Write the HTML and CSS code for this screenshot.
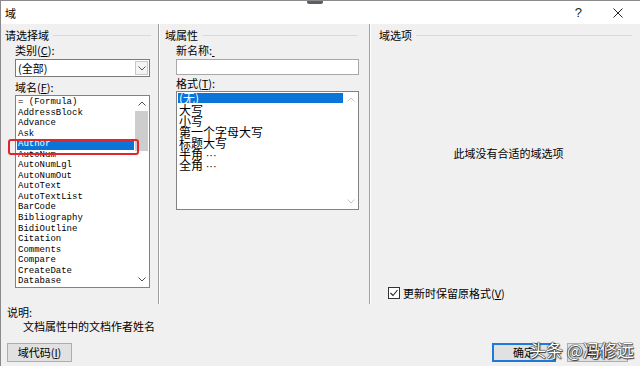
FILE: index.html
```html
<!DOCTYPE html>
<html lang="zh-CN">
<head>
<meta charset="utf-8">
<title>域</title>
<link rel="stylesheet" href="styles.css">
</head>
<body>
<div class="window">
  <div class="cursor-mark"></div>
  <div class="titlebar">
    <span class="title">域</span>
    <div class="title-btns">
      <span class="help">?</span>
      <svg class="close" width="10" height="10" viewBox="0 0 10 10"><path d="M0.5 0.5L9.5 9.5M9.5 0.5L0.5 9.5" stroke="#222" stroke-width="1" fill="none"/></svg>
    </div>
  </div>

  <div class="panes">
    <section class="pane pane-left">
      <div class="group-head"><span>请选择域</span><i class="rule"></i></div>
      <div class="indent">
        <div class="field-label first">类别(<u>C</u>):</div>
        <div class="combo">
          <span class="combo-text">(全部)</span>
          <span class="combo-btn"><svg width="8" height="5" viewBox="0 0 8 5"><path d="M0.5 0.5L4 4L7.5 0.5" stroke="#555" fill="none"/></svg></span>
        </div>
        <div class="field-label gap3">域名(<u>F</u>):</div>
        <div class="listbox names">
          <ul class="items mono">
            <li>= (Formula)</li>
            <li>AddressBlock</li>
            <li>Advance</li>
            <li>Ask</li>
            <li class="sel">Author</li>
            <li>AutoNum</li>
            <li>AutoNumLgl</li>
            <li>AutoNumOut</li>
            <li>AutoText</li>
            <li>AutoTextList</li>
            <li>BarCode</li>
            <li>Bibliography</li>
            <li>BidiOutline</li>
            <li>Citation</li>
            <li>Comments</li>
            <li>Compare</li>
            <li>CreateDate</li>
            <li>Database</li>
          </ul>
          <div class="vscroll">
            <span class="arrow"><svg width="8" height="5" viewBox="0 0 8 5"><path d="M0.5 4.5L4 1L7.5 4.5" stroke="#505050" fill="none"/></svg></span>
            <span class="thumb"></span>
            <span class="track"></span>
            <span class="arrow"><svg width="8" height="5" viewBox="0 0 8 5"><path d="M0.5 0.5L4 4L7.5 0.5" stroke="#505050" fill="none"/></svg></span>
          </div>
        </div>
      </div>
      <div class="ring"></div>
    </section>

    <section class="pane pane-mid">
      <div class="group-head"><span>域属性</span><i class="rule"></i></div>
      <div class="indent">
        <div class="field-label first">新名称:<u class="blank">&nbsp;</u></div>
        <div class="textbox"></div>
        <div class="field-label gap1">格式(<u>T</u>):</div>
        <div class="listbox formats">
          <ul class="items cjk">
            <li class="sel">(无)</li>
            <li>大写</li>
            <li>小写</li>
            <li>第一个字母大写</li>
            <li>标题大写</li>
            <li>半角 <span class="dots">···</span></li>
            <li>全角 <span class="dots">···</span></li>
          </ul>
          <div class="vscroll disabled">
            <span class="arrow"><svg width="8" height="5" viewBox="0 0 8 5"><path d="M0.5 4.5L4 1L7.5 4.5" stroke="#c4c4c4" fill="none"/></svg></span>
            <span class="track"></span>
            <span class="arrow"><svg width="8" height="5" viewBox="0 0 8 5"><path d="M0.5 0.5L4 4L7.5 0.5" stroke="#c4c4c4" fill="none"/></svg></span>
          </div>
        </div>
      </div>
    </section>

    <section class="pane pane-right">
      <div class="group-head"><span>域选项</span><i class="rule"></i></div>
      <div class="empty-msg">此域没有合适的域选项</div>
      <label class="check-row">
        <svg class="checkbox" width="12" height="12" viewBox="0 0 12 12"><rect x="0.5" y="0.5" width="11" height="11" fill="#fff" stroke="#333"/><path d="M2.5 6L5 8.5L9.5 3" stroke="#222" stroke-width="1.1" fill="none"/></svg>
        <span>更新时保留原格式(<u>V</u>)</span>
      </label>
    </section>
  </div>

  <div class="footer">
    <div class="desc-label">说明:</div>
    <div class="desc-text">文档属性中的文档作者姓名</div>
    <div class="btn-row">
      <button class="btn codes">域代码(<u>I</u>)</button>
      <span class="spacer"></span>
      <button class="btn ok">确定</button>
      <button class="btn cancel">取消</button>
    </div>
  </div>

  <div class="watermark">头条 @冯修远</div>
</div>
</body>
</html>
```

FILE: styles.css
```css
* { box-sizing: border-box; }

body {
  margin: 0;
  background: #f0f0f0;
  font-family: "Noto Sans CJK SC", "Noto Sans", sans-serif;
  font-size: 11px;
  color: #000;
}

u { text-decoration: underline; text-underline-offset: 1px; }

.window {
  width: 640px;
  height: 366px;
  position: relative;
  overflow: hidden;
  background: #f0f0f0;
  border-top: 1px solid #8a8a8a;
  border-left: 1px solid #8a8a8a;
  display: flex;
  flex-direction: column;
}

.cursor-mark {
  position: absolute;
  left: 306px;
  top: -1px;
  width: 16px;
  height: 4px;
  background: #5a5f66;
  border-radius: 0 0 2px 2px;
}

.titlebar {
  height: 23px;
  background: #fff;
  display: flex;
  align-items: center;
  justify-content: space-between;
  padding: 0 17px 0 4px;
}

.title { font-size: 11px; line-height: 14px; }

.title-btns { display: flex; align-items: center; }

.help {
  font-family: "Liberation Sans", sans-serif;
  font-size: 13px;
  line-height: 14px;
  color: #222;
  margin-right: 31px;
}

.close { display: block; }

.panes {
  display: flex;
  height: 280px;
}

.pane {
  display: flex;
  flex-direction: column;
  padding-top: 4px;
}

.pane-left {
  position: relative;
  width: 158px;
  padding-left: 4px;
  border-right: 1px solid #a0a0a0;
}

.pane-mid {
  width: 211px;
  padding-left: 5px;
  border-left: 1px solid #fff;
  border-right: 1px solid #a0a0a0;
}

.pane-right {
  flex: 1;
  padding-left: 8px;
  padding-bottom: 4px;
  border-left: 1px solid #fff;
}

.group-head {
  display: flex;
  align-items: center;
  height: 14px;
  line-height: 14px;
}

.group-head .rule {
  flex: 1;
  height: 1px;
  background: #d9d9d9;
  margin-left: 4px;
}

.pane-left .group-head .rule { margin-right: 7px; }
.pane-mid .group-head .rule { margin-right: 11px; }
.pane-right .group-head .rule { margin-right: 8px; }

.indent {
  margin-left: 10px;
  display: flex;
  flex-direction: column;
}

.pane-mid .indent { margin-left: 11px; }

.field-label {
  line-height: 14px;
  height: 14px;
}
.field-label.first { margin-top: 1px; }
.field-label.gap3 { margin-top: 3px; }
.field-label.gap1 { margin-top: 1px; }

.blank { display: inline-block; width: 4px; }

.combo {
  margin-top: 2px;
  width: 135px;
  height: 18px;
  background: #fff;
  border: 1px solid #7a7a7a;
  display: flex;
  align-items: center;
  justify-content: space-between;
  padding-left: 2px;
}

.combo-text { line-height: 14px; }

.combo-btn {
  width: 13px;
  height: 14px;
  margin-right: 1px;
  border: 1px solid #c8c8c8;
  background: #f4f4f4;
  display: flex;
  align-items: center;
  justify-content: center;
}

.combo-btn svg, .arrow svg { display: block; }

.textbox {
  margin-top: 2px;
  width: 183px;
  height: 16px;
  background: #fff;
  border: 1px solid #a8a8a8;
}

.listbox {
  margin-top: 1px;
  background: #fff;
  border: 1px solid #828282;
  display: flex;
}

.listbox.names { width: 135px; height: 193px; }
.listbox.formats { width: 183px; height: 119px; }

.items {
  list-style: none;
  margin: 0;
  padding: 0 0 0 1px;
  flex: 1;
  min-width: 0;
}

.items li { white-space: nowrap; padding-left: 1px; }

.names .items { padding-top: 1px; }

.items.mono li {
  font-family: "Liberation Mono", monospace;
  font-size: 9px;
  height: 10.55px;
  line-height: 10.55px;
}

.items.cjk li {
  font-size: 12px;
  height: 11px;
  line-height: 11px;
}

.dots {
  font-family: "Liberation Sans", sans-serif;
  font-size: 11px;
  letter-spacing: 0;
}

.items li.sel {
  background: #0a74d8;
  color: #fff;
}

.formats .items { padding-top: 1px; }
.formats .items li.sel { height: 10px; line-height: 10px; margin-bottom: 1px; }

.vscroll {
  width: 15px;
  display: flex;
  flex-direction: column;
  align-items: center;
  padding: 0 1px;
}

.vscroll .arrow {
  height: 15px;
  width: 100%;
  display: flex;
  align-items: center;
  justify-content: center;
}

.vscroll .thumb {
  width: 100%;
  height: 40px;
  background: #cdcdcd;
}

.vscroll .track { flex: 1; }

.ring {
  position: absolute;
  left: 7px;
  top: 115px;
  width: 131px;
  height: 16px;
  border: 2px solid #e0262a;
  border-radius: 3px;
}

.empty-msg {
  margin-top: 104px;
  text-align: center;
  line-height: 14px;
  padding-right: 2px;
}

.check-row {
  margin-top: auto;
  margin-left: 9px;
  display: flex;
  align-items: center;
  gap: 3px;
  line-height: 14px;
  height: 14px;
}

.checkbox { display: block; }

.footer {
  flex: 1;
  display: flex;
  flex-direction: column;
  padding: 1px 0 0 6px;
}

.desc-label { line-height: 14px; }
.desc-text { line-height: 14px; margin-left: 16px; }

.btn-row {
  margin-top: 10px;
  display: flex;
  align-items: center;
}

.spacer { flex: 1; }

.btn {
  font-family: inherit;
  font-size: 11px;
  color: #000;
  height: 19px;
  padding: 0;
  background: #e1e1e1;
  border: 1px solid #adadad;
  line-height: 15px;
}

.btn.codes { width: 65px; }
.btn.ok { width: 64px; border: 2px solid #1e7ad6; margin-right: 11px; }
.btn.cancel { width: 61px; margin-right: 12px; }

.watermark {
  position: absolute;
  left: 528px;
  top: 339px;
  font-size: 17px;
  line-height: 20px;
  color: #fff;
  white-space: nowrap;
  text-shadow: 0 0 1px #222, 0 0 1px #222, 0 0 1px #222, 1px 1px 1px #444;
}
```
